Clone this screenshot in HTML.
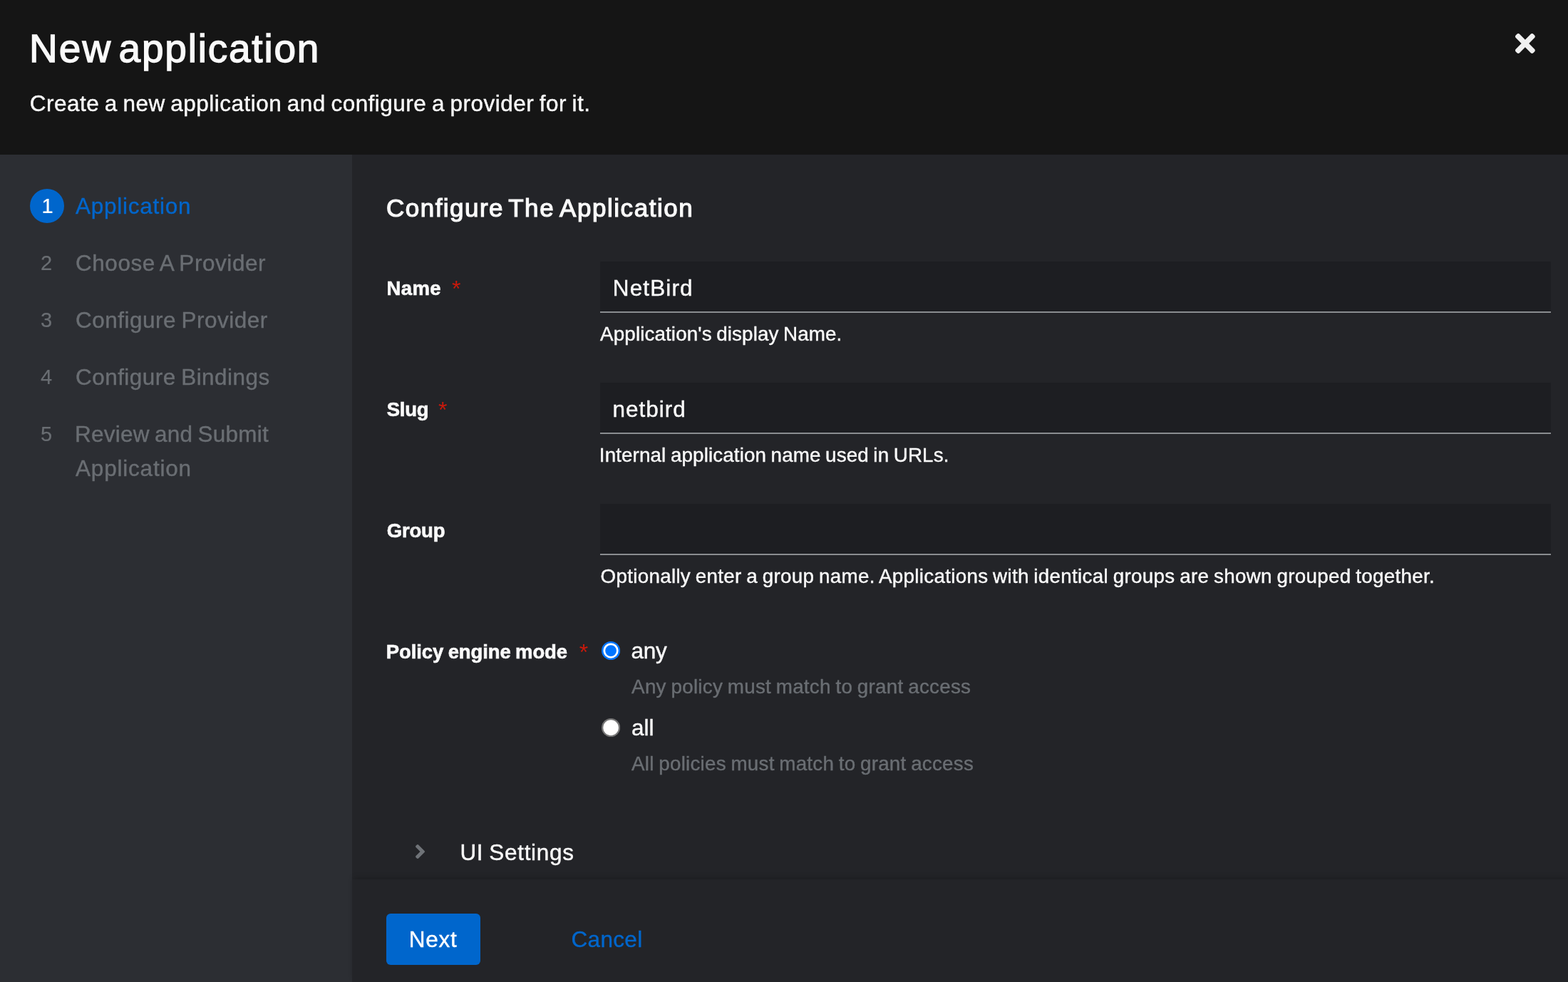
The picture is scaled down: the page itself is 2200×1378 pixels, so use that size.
<!DOCTYPE html>
<html lang="en">
<head>
<meta charset="utf-8">
<title>New application</title>
<style>
*{box-sizing:border-box;margin:0;padding:0}
html,body{width:2200px;height:1378px;overflow:hidden;background:#232428}
body{position:relative;will-change:transform;font-family:"Liberation Sans",Arial,sans-serif;font-size:32px;color:#fafafa}
h1,h2,p,label,ol,li{font-weight:inherit;font-size:inherit;list-style:none}
button{all:unset;display:block}
.t{position:absolute;white-space:nowrap;line-height:1;display:block;text-decoration:none}
.abs{position:absolute;display:block}
header{position:absolute;left:0;top:0;width:2200px;height:217px;background:#151515}
nav{position:absolute;left:0;top:217px;width:494px;height:1161px;background:#2c2e33}
main{position:absolute;left:494px;top:217px;width:1706px;height:1017px;background:#232428}
footer{position:absolute;left:494px;top:1234px;width:1706px;height:144px;background:#232428;box-shadow:0 -4px 8px -2px rgba(3,3,3,.2)}
.num1{position:absolute;left:42px;top:47.5px;width:48px;height:48px;border-radius:50%;background:#0066cc}
.inp{position:absolute;left:348px;width:1334px;height:72px;background:#1d1e22;border-bottom:2px solid #8a8d90}
.btn{position:absolute;left:48px;top:48px;width:132px;height:72px;border-radius:6px;background:#0066cc}
#t_title_a{left:41.00px;top:41px;font-size:55.0px;font-weight:400;color:#fafafa;letter-spacing:2.050px;-webkit-text-stroke:1.35px #fafafa;}
#t_title_b{left:166.60px;top:41px;font-size:55.0px;font-weight:400;color:#fafafa;letter-spacing:1.780px;-webkit-text-stroke:1.35px #fafafa;}
#t_desc{left:41.80px;top:130px;font-size:31.5px;font-weight:400;color:#fafafa;letter-spacing:0.477px;word-spacing:-1.6px;-webkit-text-stroke:0.4px #fafafa;}
#t_n1{left:58.40px;top:58px;font-size:29.0px;font-weight:400;color:#ffffff;-webkit-text-stroke:0.2px #ffffff;}
#t_s1{left:106.00px;top:57px;font-size:31.5px;font-weight:400;color:#0066cc;letter-spacing:0.750px;-webkit-text-stroke:0.4px #0066cc;}
#t_n2{left:57.00px;top:138px;font-size:29.0px;font-weight:400;color:#6a6e73;-webkit-text-stroke:0.2px #6a6e73;}
#t_s2{left:106.00px;top:137px;font-size:31.5px;font-weight:400;color:#6a6e73;letter-spacing:0.550px;word-spacing:-1.6px;-webkit-text-stroke:0.4px #6a6e73;}
#t_n3{left:57.00px;top:218px;font-size:29.0px;font-weight:400;color:#6a6e73;-webkit-text-stroke:0.2px #6a6e73;}
#t_s3{left:106.00px;top:217px;font-size:31.5px;font-weight:400;color:#6a6e73;letter-spacing:0.482px;word-spacing:-1.6px;-webkit-text-stroke:0.4px #6a6e73;}
#t_n4{left:57.00px;top:298px;font-size:29.0px;font-weight:400;color:#6a6e73;-webkit-text-stroke:0.2px #6a6e73;}
#t_s4{left:106.00px;top:297px;font-size:31.5px;font-weight:400;color:#6a6e73;letter-spacing:0.447px;word-spacing:-1.6px;-webkit-text-stroke:0.4px #6a6e73;}
#t_n5{left:57.00px;top:378px;font-size:29.0px;font-weight:400;color:#6a6e73;-webkit-text-stroke:0.2px #6a6e73;}
#t_s5{left:105.00px;top:377px;font-size:31.5px;font-weight:400;color:#6a6e73;letter-spacing:0.219px;word-spacing:-1.6px;-webkit-text-stroke:0.4px #6a6e73;}
#t_s5b{left:106.00px;top:425px;font-size:31.5px;font-weight:400;color:#6a6e73;letter-spacing:0.800px;-webkit-text-stroke:0.4px #6a6e73;}
#t_h_a{left:48.00px;top:57px;font-size:35.0px;font-weight:400;color:#fafafa;letter-spacing:1.475px;-webkit-text-stroke:1.2px #fafafa;}
#t_h_b{left:219.20px;top:57px;font-size:35.0px;font-weight:400;color:#fafafa;letter-spacing:1.550px;-webkit-text-stroke:1.2px #fafafa;}
#t_h_c{left:291.00px;top:57px;font-size:35.0px;font-weight:400;color:#fafafa;letter-spacing:1.550px;-webkit-text-stroke:1.2px #fafafa;}
#t_l1{left:48.40px;top:174px;font-size:27.5px;font-weight:700;color:#fafafa;letter-spacing:0.433px;-webkit-text-stroke:0.6px #fafafa;}
#t_a1{left:140.00px;top:172px;font-size:32px;font-weight:400;color:#c9190b;}
#t_i1{left:365.80px;top:172px;font-size:31.5px;font-weight:400;color:#fafafa;letter-spacing:1.117px;-webkit-text-stroke:0.4px #fafafa;}
#t_h1{left:348.10px;top:238px;font-size:27.8px;font-weight:400;color:#fafafa;letter-spacing:0.108px;word-spacing:-1.3px;-webkit-text-stroke:0.4px #fafafa;}
#t_l2{left:48.70px;top:344px;font-size:27.5px;font-weight:700;color:#fafafa;letter-spacing:-0.233px;-webkit-text-stroke:0.6px #fafafa;}
#t_a2{left:121.00px;top:342px;font-size:32px;font-weight:400;color:#c9190b;}
#t_i2{left:365.60px;top:342px;font-size:31.5px;font-weight:400;color:#fafafa;letter-spacing:0.983px;-webkit-text-stroke:0.4px #fafafa;}
#t_h2{left:346.80px;top:408px;font-size:27.8px;font-weight:400;color:#fafafa;letter-spacing:0.111px;word-spacing:-1.3px;-webkit-text-stroke:0.4px #fafafa;}
#t_l3{left:48.80px;top:514px;font-size:27.5px;font-weight:700;color:#fafafa;letter-spacing:-0.200px;-webkit-text-stroke:0.6px #fafafa;}
#t_h3{left:348.50px;top:578px;font-size:27.8px;font-weight:400;color:#fafafa;letter-spacing:0.293px;word-spacing:-1.3px;-webkit-text-stroke:0.4px #fafafa;}
#t_l4{left:47.80px;top:684px;font-size:27.5px;font-weight:700;color:#fafafa;letter-spacing:-0.115px;word-spacing:-1.0px;-webkit-text-stroke:0.6px #fafafa;}
#t_a4{left:318.70px;top:682px;font-size:32px;font-weight:400;color:#c9190b;}
#t_r1{left:391.60px;top:681px;font-size:31.5px;font-weight:400;color:#fafafa;letter-spacing:-0.350px;-webkit-text-stroke:0.4px #fafafa;}
#t_d1{left:392.10px;top:733px;font-size:27.8px;font-weight:400;color:#6a6e73;letter-spacing:0.261px;word-spacing:-1.3px;-webkit-text-stroke:0.4px #6a6e73;}
#t_r2{left:392.00px;top:789px;font-size:31.5px;font-weight:400;color:#fafafa;-webkit-text-stroke:0.4px #fafafa;}
#t_d2{left:392.10px;top:841px;font-size:27.8px;font-weight:400;color:#6a6e73;letter-spacing:0.226px;word-spacing:-1.3px;-webkit-text-stroke:0.4px #6a6e73;}
#t_ui{left:151.40px;top:964px;font-size:31.5px;font-weight:400;color:#fafafa;letter-spacing:0.720px;word-spacing:-1.6px;-webkit-text-stroke:0.4px #fafafa;}
#t_next{left:31.80px;top:21px;font-size:31.5px;font-weight:400;color:#ffffff;letter-spacing:0.767px;-webkit-text-stroke:0.4px #ffffff;}
#t_cancel{left:307.40px;top:69px;font-size:31.5px;font-weight:400;color:#0066cc;letter-spacing:0.360px;-webkit-text-stroke:0.4px #0066cc;}
</style>
</head>
<body>
<header>
  <h1><span class="t" id="t_title_a">New</span> <span class="t" id="t_title_b">application</span></h1>
  <p class="t" id="t_desc">Create a new application and configure a provider for it.</p>
  <button type="button" aria-label="Close"><svg class="abs" style="left:2126.4px;top:47px" width="27.8" height="28" preserveAspectRatio="none" viewBox="0 80 352 352"><path fill="#f0f0f0" d="M242.72 256l100.07-100.07c12.28-12.28 12.28-32.19 0-44.48l-22.24-22.24c-12.28-12.28-32.19-12.28-44.48 0L176 189.28 75.93 89.21c-12.28-12.28-32.19-12.28-44.48 0L9.21 111.45c-12.28 12.28-12.28 32.19 0 44.48L109.28 256 9.21 356.07c-12.28 12.28-12.28 32.19 0 44.48l22.24 22.24c12.28 12.28 32.2 12.28 44.48 0L176 322.72l100.07 100.07c12.28 12.28 32.2 12.28 44.48 0l22.24-22.24c12.28-12.28 12.28-32.19 0-44.48L242.72 256z"/></svg></button>
</header>
<nav aria-label="Steps">
  <ol>
    <li><span class="num1"></span><span class="t" id="t_n1">1</span><a class="t" id="t_s1">Application</a></li>
    <li><span class="t" id="t_n2">2</span><span class="t" id="t_s2">Choose A Provider</span></li>
    <li><span class="t" id="t_n3">3</span><span class="t" id="t_s3">Configure Provider</span></li>
    <li><span class="t" id="t_n4">4</span><span class="t" id="t_s4">Configure Bindings</span></li>
    <li><span class="t" id="t_n5">5</span><span class="t" id="t_s5">Review and Submit</span> <span class="t" id="t_s5b">Application</span></li>
  </ol>
</nav>
<main>
  <h2><span class="t" id="t_h_a">Configure</span> <span class="t" id="t_h_b">The</span> <span class="t" id="t_h_c">Application</span></h2>
  <div>
    <label class="t" id="t_l1">Name</label><span class="t" id="t_a1">*</span>
    <div class="inp" style="top:150px"></div><span class="t" id="t_i1">NetBird</span>
    <p class="t" id="t_h1">Application&#39;s display Name.</p>
  </div>
  <div>
    <label class="t" id="t_l2">Slug</label><span class="t" id="t_a2">*</span>
    <div class="inp" style="top:320px"></div><span class="t" id="t_i2">netbird</span>
    <p class="t" id="t_h2">Internal application name used in URLs.</p>
  </div>
  <div>
    <label class="t" id="t_l3">Group</label>
    <div class="inp" style="top:490px"></div>
    <p class="t" id="t_h3">Optionally enter a group name. Applications with identical groups are shown grouped together.</p>
  </div>
  <div>
    <label class="t" id="t_l4">Policy engine mode</label><span class="t" id="t_a4">*</span>
    <svg class="abs" style="left:349.9px;top:682.9px" width="26.2" height="26.2" viewBox="0 0 26.2 26.2"><circle cx="13.1" cy="13.1" r="13.1" fill="#0075ff"/><circle cx="13.1" cy="13.1" r="10.6" fill="#ffffff"/><circle cx="13.1" cy="13.1" r="7.9" fill="#0075ff"/></svg><span class="t" id="t_r1">any</span>
    <p class="t" id="t_d1">Any policy must match to grant access</p>
    <svg class="abs" style="left:349.9px;top:790.9px" width="26.2" height="26.2" viewBox="0 0 26.2 26.2"><circle cx="13.1" cy="13.1" r="13.1" fill="#767676"/><circle cx="13.1" cy="13.1" r="10.8" fill="#ffffff"/></svg><span class="t" id="t_r2">all</span>
    <p class="t" id="t_d2">All policies must match to grant access</p>
  </div>
  <div>
    <svg class="abs" style="left:89.4px;top:967.9px" width="13.1" height="20" viewBox="24 96 208 320"><path fill="#6f7378" d="M224.3 273l-136 136c-9.4 9.4-24.6 9.4-33.9 0l-22.6-22.6c-9.4-9.4-9.4-24.6 0-33.9l96.4-96.4-96.4-96.4c-9.4-9.4-9.4-24.6 0-33.9L54.3 103c9.4-9.4 24.6-9.4 33.9 0l136 136c9.5 9.4 9.5 24.6.1 34z"/></svg>
    <span class="t" id="t_ui">UI Settings</span>
  </div>
</main>
<footer>
  <button type="button" class="btn"><span class="t" id="t_next">Next</span></button>
  <a class="t" id="t_cancel">Cancel</a>
</footer>
</body>
</html>
